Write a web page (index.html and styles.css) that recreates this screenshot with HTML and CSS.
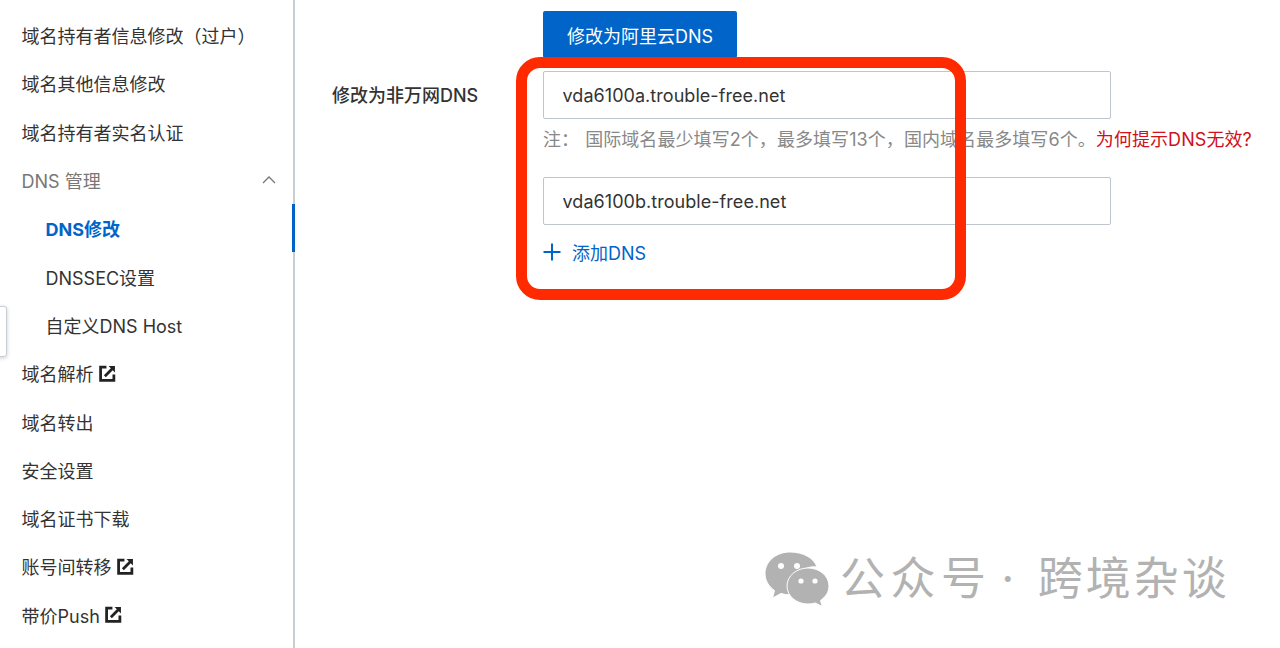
FILE: index.html
```html
<!DOCTYPE html>
<html lang="zh-CN">
<head>
    <meta charset="UTF-8">
    <title>DNS修改</title>
    <link rel="stylesheet" href="styles.css">
</head>
<body>
    <div class="page">
        <aside class="sidebar">
            <ul class="menu">
                <li class="item">域名持有者信息修改（过户）</li>
                <li class="item">域名其他信息修改</li>
                <li class="item">域名持有者实名认证</li>
                <li class="item group">
                    DNS 管理
                    <svg class="chevron" viewBox="0 0 14 8"><path d="M1 7l6-6 6 6"/></svg>
                </li>
                <li class="item sub active">DNS修改</li>
                <li class="item sub">DNSSEC设置</li>
                <li class="item sub">自定义DNS Host</li>
                <li class="item">域名解析 <svg class="ext" viewBox="0 0 16 16"><path class="ext-box" d="M7 2H1.500v12.500H14V9"/><path class="ext-arrow" d="M5.500 10.500L12.500 3.500"/><path class="ext-head" d="M9 1h6v6z"/></svg></li>
                <li class="item">域名转出</li>
                <li class="item">安全设置</li>
                <li class="item">域名证书下载</li>
                <li class="item">账号间转移 <svg class="ext" viewBox="0 0 16 16"><path class="ext-box" d="M7 2H1.500v12.500H14V9"/><path class="ext-arrow" d="M5.500 10.500L12.500 3.500"/><path class="ext-head" d="M9 1h6v6z"/></svg></li>
                <li class="item">带价Push <svg class="ext" viewBox="0 0 16 16"><path class="ext-box" d="M7 2H1.500v12.500H14V9"/><path class="ext-arrow" d="M5.500 10.500L12.500 3.500"/><path class="ext-head" d="M9 1h6v6z"/></svg></li>
            </ul>
        </aside>

        <main class="content">
            <div class="form">
                <div class="field-wrap">
                    <button class="primary-btn">修改为阿里云DNS</button>
                </div>
                <label class="field-label" for="dns1">修改为非万网DNS</label>
                <div class="field-wrap">
                    <input class="text-input" id="dns1" type="text" value="vda6100a.trouble-free.net">
                    <p class="note"><span class="note-key">注：</span>国际域名最少填写2个，最多填写13个，国内域名最多填写6个。<a class="note-link">为何提示DNS无效?</a></p>
                    <input class="text-input" id="dns2" type="text" value="vda6100b.trouble-free.net">
                    <a class="add-link">
                        <svg class="plus" viewBox="0 0 18 18"><path d="M9 0.500v17M0.500 9h17"/></svg>
                        添加DNS
                    </a>
                </div>
            </div>
        </main>
    </div>

    <div class="side-tab"></div>
    <div class="highlight"></div>

    <div class="watermark">
        <svg class="wechat" viewBox="0 0 64 54">
            <path class="bubble" d="M25 0C11 0 0 9.500 0 21.500c0 7 3.800 13 9.500 17l-2 7.500 8.500-4.500c3 .9 6 1.300 9 1.300 1 0 2-.1 3-.1C27 23 38 13.500 52 15 49 6 38 0 25 0z"/>
            <path class="bubble" d="M64 34c0-10.500-10-18-21-18s-21 7.500-21 18 10 18 21 18c2.500 0 5-.4 7.300-1l7 3.500-1.800-6C60.500 45 64 40 64 34z"/>
            <circle class="eye" cx="16" cy="14" r="3"/>
            <circle class="eye" cx="32" cy="14" r="3"/>
            <circle class="eye" cx="36" cy="29" r="2.600"/>
            <circle class="eye" cx="50" cy="29" r="2.600"/>
        </svg>
        <span class="watermark-text"><span class="watermark-lead">公众号</span> <span class="watermark-dot">·</span> 跨境杂谈</span>
    </div>
</body>
</html>
```

FILE: styles.css
```css
* {
    box-sizing: border-box;
}

html, body {
    margin: 0;
    height: 100%;
    overflow: hidden;
}

body {
    font-family: Inter, "Noto Sans CJK SC", sans-serif;
    font-size: 18px;
    color: #333;
    background-color: #fff;
}

.page {
    display: flex;
    height: 648px;
}

.sidebar {
    width: 295px;
    flex-shrink: 0;
    border-right: 2px solid #c9ced6;
}

.menu {
    list-style: none;
    margin: 0;
    padding: 11px 0 0;
}

.item {
    display: flex;
    align-items: center;
    gap: 5px;
    height: 48.3px;
    padding-left: 21.500px;
    margin-right: -2px;
    white-space: nowrap;
}

.group {
    justify-content: space-between;
    padding-right: 19px;
    color: #777;
}

.sub {
    padding-left: 45.500px;
}

.active {
    color: #0064c8;
    font-weight: 700;
    border-right: 3px solid #0064c8;
}

.chevron {
    width: 14px;
    height: 8px;
    fill: none;
    stroke: #777;
    stroke-width: 1.300;
}

.ext {
    width: 17px;
    height: 17px;
}

.ext-box, .ext-arrow {
    fill: none;
    stroke: #222;
    stroke-width: 2.600;
}

.ext-head {
    fill: #222;
}

.content {
    flex: 1;
    padding: 11px 0 0 37px;
}

.form {
    display: grid;
    grid-template-columns: 211px 568px;
    row-gap: 13px;
}

.form > .field-wrap:first-child {
    grid-column: 2;
}

.field-label {
    padding-top: 1px;
    line-height: 48px;
    font-weight: 500;
}

.primary-btn {
    display: block;
    width: 194px;
    height: 47px;
    border: 0;
    border-radius: 2px;
    background-color: #0064c8;
    color: #fff;
    font: inherit;
}

.text-input {
    display: block;
    width: 100%;
    height: 48px;
    padding: 0 18.500px;
    border: 1.500px solid #bfc5cf;
    border-radius: 2px;
    color: #333;
    font: inherit;
    letter-spacing: 0.05px;
}

.note {
    margin: 8px 0 24px;
    line-height: 26px;
    color: #888;
    white-space: nowrap;
    letter-spacing: 0.07px;
}

.note-key {
    margin-right: 6px;
}

.note-link {
    color: #d0101c;
}

.add-link {
    display: flex;
    align-items: center;
    gap: 11px;
    margin-top: 15px;
    line-height: 28px;
    color: #0064c8;
}

.plus {
    width: 18px;
    height: 18px;
    margin-top: -4px;
    fill: none;
    stroke: #0064c8;
    stroke-width: 2;
}

.side-tab {
    position: absolute;
    left: -4px;
    top: 306px;
    width: 11px;
    height: 51px;
    background-color: #fff;
    border: 1px solid #c9ced6;
    border-radius: 3px;
    box-shadow: 0 1px 4px rgba(0, 0, 0, 0.2);
}

.highlight {
    position: absolute;
    left: 516px;
    top: 57px;
    width: 450px;
    height: 243px;
    border: 11px solid #ff2a00;
    border-radius: 24px;
}

.watermark {
    position: absolute;
    left: 765px;
    top: 552px;
    display: flex;
    align-items: center;
    gap: 11px;
    color: #b2b2b2;
}

.wechat {
    width: 64px;
    height: 54px;
}

.bubble {
    fill: #b2b2b2;
    stroke: #fff;
    stroke-width: 1;
}

.eye {
    fill: #fff;
}

.watermark-text {
    font-size: 45px;
    line-height: 54px;
    white-space: nowrap;
    word-spacing: -6px;
    letter-spacing: 3px;
}

.watermark-lead {
    letter-spacing: 5.500px;
}

.watermark-dot {
    margin-right: 11px;
}
```
